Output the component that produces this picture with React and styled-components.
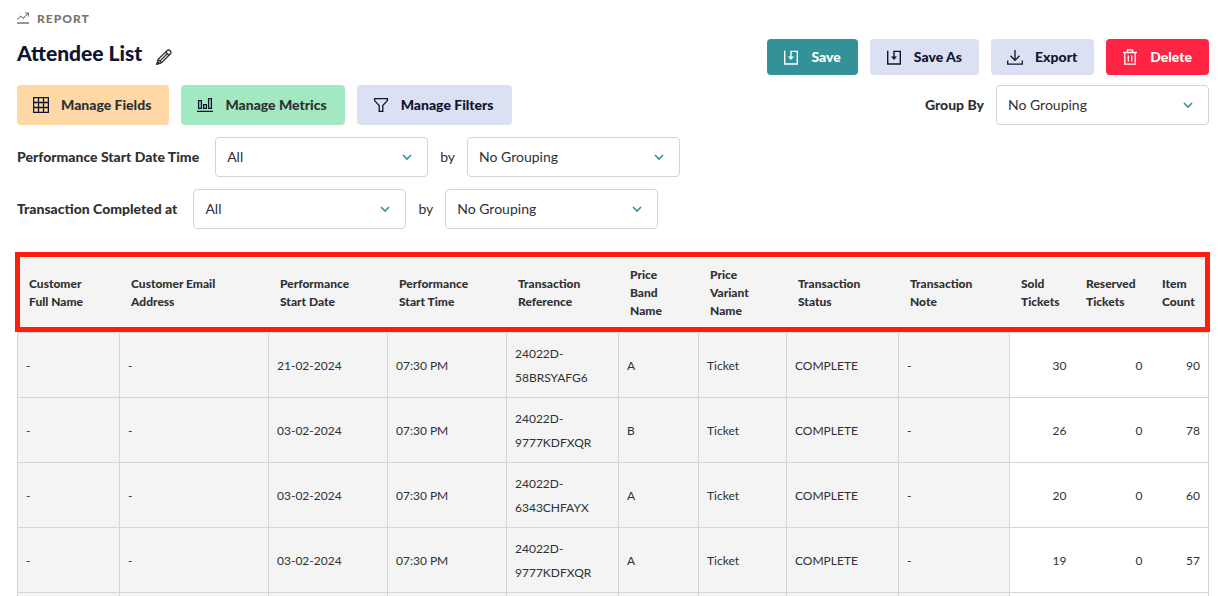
import React, { useState } from 'react';
import styled, { createGlobalStyle } from 'styled-components';

const GlobalStyle = createGlobalStyle`
  * {
    box-sizing: border-box;
  }

  body {
    margin: 0;
    background: #ffffff;
    color: #2f3133;
    font-family: Lato, 'Liberation Sans', sans-serif;
    font-size: 14px;
  }
`;

// Styled Components
const Page = styled.main`
  height: 100vh;
  padding: 9px 16px 0 17px;
  overflow: hidden;
`;

const Eyebrow = styled.div`
  display: flex;
  align-items: center;
  gap: 8px;
  height: 18px;
  color: #757575;
  font-size: 12px;
  font-weight: 900;
  letter-spacing: 1px;
  text-transform: uppercase;
`;

const TitleRow = styled.header`
  display: flex;
  justify-content: space-between;
  margin-top: 12px;
  margin-bottom: 10px;
`;

const TitleGroup = styled.div`
  display: flex;
  align-items: center;
  gap: 14px;
  height: 28px;
`;

const Title = styled.h1`
  margin: 0;
  color: #0f1432;
  font-size: 21px;
  line-height: 28px;
  font-weight: 900;
`;

const IconButton = styled.button`
  display: flex;
  padding: 8px 0 0;
  border: 0;
  background: none;
  color: #2f3133;
  cursor: pointer;
`;

const ButtonGroup = styled.div`
  display: flex;
  gap: 12px;
`;

const variants = {
  primary: { background: '#329297', color: '#ffffff' },
  secondary: { background: '#dbe1f3', color: '#0f1432' },
  danger: { background: '#ff2444', color: '#ffffff' },
  fields: { background: '#ffd8a5', color: '#2f3133', icon: '#0f1432' },
  metrics: { background: '#a2e9c1', color: '#2f3133', icon: '#0f1432' },
};

const Button = styled.button`
  display: flex;
  align-items: center;
  gap: 12px;
  height: ${props => (props.$large ? '40px' : '36px')};
  padding: 0 ${props => (props.$large ? '18px' : '17px')} 1px 16px;
  border: 0;
  border-radius: 4px;
  background: ${props => variants[props.$variant].background};
  color: ${props => variants[props.$variant].color};
  font-family: inherit;
  font-size: 14px;
  font-weight: 900;
  white-space: nowrap;
  cursor: pointer;

  svg {
    color: ${props => variants[props.$variant].icon || 'inherit'};
  }
`;

const Toolbar = styled.div`
  display: flex;
  justify-content: space-between;
  margin-bottom: 12px;
`;

const FieldGroup = styled.div`
  display: flex;
  align-items: center;
  gap: 12px;
`;

const Label = styled.label`
  padding-bottom: 2px;
  font-size: 14px;
  font-weight: ${props => (props.$light ? 400 : 900)};
`;

const FilterRow = styled(FieldGroup)`
  margin-bottom: 12px;

  ${Label}:first-child {
    padding-right: 4px;
  }
`;

const SelectWrap = styled.div`
  position: relative;
  width: 213px;

  svg {
    position: absolute;
    top: 12px;
    right: 13px;
    color: #329297;
    pointer-events: none;
  }
`;

const StyledSelect = styled.select`
  appearance: none;
  width: 100%;
  height: 40px;
  padding: 0 32px 1px 11px;
  border: 1px solid #d5d5d5;
  border-radius: 4px;
  background: #ffffff;
  color: #2f3133;
  font-family: inherit;
  font-size: 14px;
`;

const TableWrap = styled.div`
  margin-top: 25px;
  padding-right: 1px;
`;

const Table = styled.table`
  width: 100%;
  table-layout: fixed;
  border-collapse: collapse;
`;

const Head = styled.thead`
  position: relative;

  &::after {
    content: '';
    position: absolute;
    inset: -2px -1px 1px -3px;
    border: 5px solid #ff1e0c;
  }
`;

const HeadCell = styled.th`
  height: 78px;
  padding: 0 ${props => (props.$numeric ? '8px' : '20px')} 0 11px;
  border: solid #f4f4f4;
  border-width: 0 1px;
  background: #f4f4f4;
  font-size: 12px;
  line-height: 18px;
  font-weight: 900;
  text-align: left;
`;

const Cell = styled.td`
  height: 65px;
  padding: 9px 8px 7px;
  border: 1px solid #d5d5d5;
  background: #f4f4f4;
  font-size: 12px;
  line-height: 24px;
`;

const NumberCell = styled(Cell)`
  border-width: 1px 0;
  background: #ffffff;
  text-align: right;

  &:last-child {
    border-right-width: 1px;
  }
`;

const Icon = ({ size = 16, strokeWidth = 1.3, children }) => (
  <svg
    width={size}
    height={size}
    viewBox="0 0 16 16"
    fill="none"
    stroke="currentColor"
    strokeWidth={strokeWidth}
    aria-hidden="true"
  >
    {children}
  </svg>
);

const TrendIcon = () => (
  <Icon size={12} strokeWidth={1.4}>
    <path d="M0.5 10L5 5.5L8.5 8.5L14.5 2M10.5 1.3H15.2V6" />
    <path d="M0 14.7H16" strokeWidth="2" />
  </Icon>
);

const PencilIcon = () => (
  <Icon strokeWidth={1.3}>
    <path d="M1 15L2.2 10.4L11.2 1.6Q12.6 0.4 14.2 1.8Q15.6 3.4 14.4 4.8L5.6 13.7ZM2.2 10.4L5.6 13.7M9.8 3L13 6.2M4.4 11.6L11.2 4.8" />
    <path d="M1 15L1.6 12.8L3.4 14.4Z" fill="currentColor" />
  </Icon>
);

const SaveIcon = () => (
  <Icon strokeWidth={1.4}>
    <path d="M1.7 1.7V15H14.3V2.4H8V9.5" />
    <path d="M5 7.5H11L8 10.9Z" fill="currentColor" stroke="none" />
  </Icon>
);

const ExportIcon = () => (
  <Icon>
    <path d="M8 1V11M3.5 6.8L8 11.3L12.5 6.8M0.7 11.5V15.2H15.3V11.5" />
  </Icon>
);

const TrashIcon = () => (
  <Icon>
    <path d="M1 3.5H15M5.5 3.5V0.8H10.5V3.5M2.8 3.5V15.2H13.2V3.5M6.3 6.5V12.5M9.7 6.5V12.5" />
  </Icon>
);

const GridIcon = () => (
  <Icon>
    <path d="M0.6 0.6H15.4V15.4H0.6ZM0.6 5.5H15.4M0.6 10.5H15.4M5.5 0.6V15.4M10.5 0.6V15.4" />
  </Icon>
);

const ChartIcon = () => (
  <Icon>
    <path d="M1.6 3.6H4.4V11.4H1.6ZM6.6 7.6H9.4V11.4H6.6ZM11.6 1.6H14.4V11.4H11.6ZM0 14.4H16" />
  </Icon>
);

const FilterIcon = () => (
  <Icon>
    <path d="M1.6 1.7H14.4V3.6L9.8 8.6V14.3H6.2V8.6L1.6 3.6Z" />
  </Icon>
);

const ChevronIcon = () => (
  <Icon strokeWidth={1.6}>
    <path d="M4 6L8 10L12 6" />
  </Icon>
);

const Select = ({ id, options, ...rest }) => {
  const [value, setValue] = useState(options[0]);

  return (
    <SelectWrap>
      <StyledSelect id={id} value={value} onChange={e => setValue(e.target.value)} {...rest}>
        {options.map(option => (
          <option key={option}>{option}</option>
        ))}
      </StyledSelect>
      <ChevronIcon />
    </SelectWrap>
  );
};

const columns = [
  { name: 'Customer Full Name', width: 102 },
  { name: 'Customer Email Address', width: 149 },
  { name: 'Performance Start Date', width: 119 },
  { name: 'Performance Start Time', width: 119 },
  { name: 'Transaction Reference', width: 112 },
  { name: 'Price Band Name', width: 80 },
  { name: 'Price Variant Name', width: 88 },
  { name: 'Transaction Status', width: 112 },
  { name: 'Transaction Note', width: 111 },
  { name: 'Sold Tickets', width: 65, numeric: true },
  { name: 'Reserved Tickets', width: 76, numeric: true },
  { name: 'Item Count', width: 58, numeric: true },
];

const rows = [
  { date: '21-02-2024', reference: '24022D-58BRSYAFG6', band: 'A', totals: [30, 0, 90] },
  { date: '03-02-2024', reference: '24022D-9777KDFXQR', band: 'B', totals: [26, 0, 78] },
  { date: '03-02-2024', reference: '24022D-6343CHFAYX', band: 'A', totals: [20, 0, 60] },
  { date: '03-02-2024', reference: '24022D-9777KDFXQR', band: 'A', totals: [19, 0, 57] },
];

const filters = [
  { id: 'performance-start', label: 'Performance Start Date Time' },
  { id: 'transaction-completed', label: 'Transaction Completed at' },
];

function App() {
  return (
    <Page>
      <GlobalStyle />
      <Eyebrow>
        <TrendIcon />
        Report
      </Eyebrow>

      <TitleRow>
        <TitleGroup>
          <Title>Attendee List</Title>
          <IconButton aria-label="Edit name">
            <PencilIcon />
          </IconButton>
        </TitleGroup>
        <ButtonGroup>
          <Button $variant="primary"><SaveIcon />Save</Button>
          <Button $variant="secondary"><SaveIcon />Save As</Button>
          <Button $variant="secondary"><ExportIcon />Export</Button>
          <Button $variant="danger"><TrashIcon />Delete</Button>
        </ButtonGroup>
      </TitleRow>

      <Toolbar>
        <ButtonGroup>
          <Button $large $variant="fields"><GridIcon />Manage Fields</Button>
          <Button $large $variant="metrics"><ChartIcon />Manage Metrics</Button>
          <Button $large $variant="secondary"><FilterIcon />Manage Filters</Button>
        </ButtonGroup>
        <FieldGroup>
          <Label htmlFor="group-by">Group By</Label>
          <Select id="group-by" options={['No Grouping']} />
        </FieldGroup>
      </Toolbar>

      {filters.map(filter => (
        <FilterRow key={filter.id}>
          <Label htmlFor={filter.id}>{filter.label}</Label>
          <Select id={filter.id} options={['All']} />
          <Label $light htmlFor={`${filter.id}-group`}>by</Label>
          <Select id={`${filter.id}-group`} options={['No Grouping']} />
        </FilterRow>
      ))}

      <TableWrap>
        <Table>
          <colgroup>
            {columns.map(column => (
              <col key={column.name} width={column.width} />
            ))}
          </colgroup>
          <Head>
            <tr>
              {columns.map(column => (
                <HeadCell key={column.name} scope="col" $numeric={column.numeric}>
                  {column.name}
                </HeadCell>
              ))}
            </tr>
          </Head>
          <tbody>
            {rows.map((row, index) => (
              <tr key={index}>
                <Cell>-</Cell>
                <Cell>-</Cell>
                <Cell>{row.date}</Cell>
                <Cell>07:30 PM</Cell>
                <Cell>{row.reference}</Cell>
                <Cell>{row.band}</Cell>
                <Cell>Ticket</Cell>
                <Cell>COMPLETE</Cell>
                <Cell>-</Cell>
                {row.totals.map((total, i) => (
                  <NumberCell key={i}>{total}</NumberCell>
                ))}
              </tr>
            ))}
            <tr>
              {columns.map(column =>
                column.numeric ? <NumberCell key={column.name} /> : <Cell key={column.name} />
              )}
            </tr>
          </tbody>
        </Table>
      </TableWrap>
    </Page>
  );
}

export default App;
